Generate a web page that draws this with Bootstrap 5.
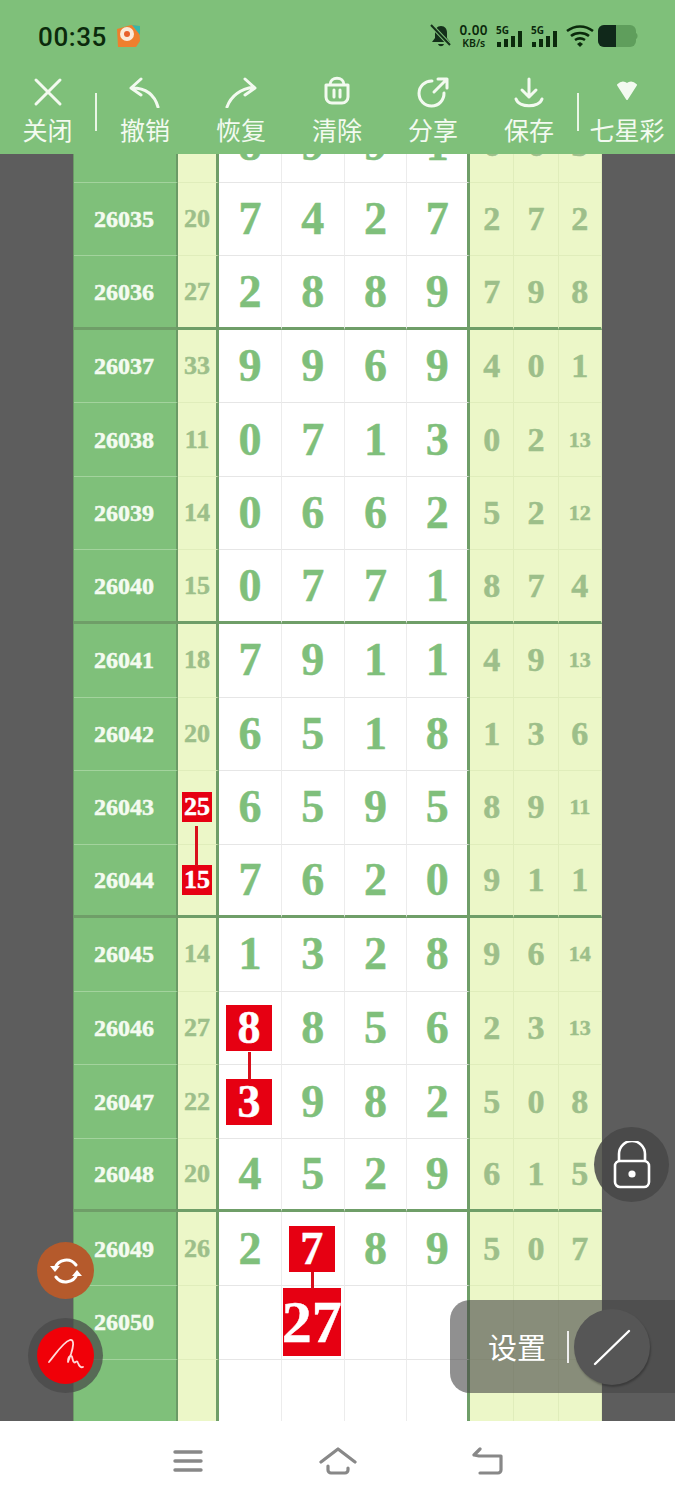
<!DOCTYPE html>
<html lang="zh">
<head>
  <meta charset="UTF-8">
  <title>七星彩</title>
  <link href="https://cdn.jsdelivr.net/npm/bootstrap@5.3.0/dist/css/bootstrap.min.css" rel="stylesheet">
  <style>
    html, body { height: 1500px; overflow: hidden; background: #fff; }
    body { font-family: "Noto Sans CJK SC", "Liberation Sans", sans-serif; }
    .phone { width: 675px; height: 1500px; position: relative; overflow: hidden; }
    .top-area { height: 154px; background: #7fc07a; flex: none; }
    .status-row { height: 72px; padding: 0 37px 0 38px; color: #0b2a0c; }
    .clock { font-family: Roboto, sans-serif; font-weight: 500; font-size: 26px; letter-spacing: .6px; line-height: 1; padding-top: 2px; }
    .speed { font-family: "Noto Sans", sans-serif; font-weight: 600; line-height: 1; text-align: center; color: #0b2a0c; }
    .speed b { display: block; font-size: 13.5px; font-weight: 600; letter-spacing: .4px; }
    .speed span { display: block; font-size: 10.5px; }
    .tool { flex: 0 0 96px; min-width: 0; color: #f3faf0; text-align: center; }
    .tool-first { flex-basis: 95px; }
    .tool svg { display: block; margin: 0 auto; height: 36px; }
    .tool-label { font-size: 25px; line-height: 32px; margin-top: 5px; white-space: nowrap; }
    .tool-sep { width: 2px; height: 38px; background: #eaf6e6; margin-top: 21px; flex: none; }
    .sheet-wrap { height: 1267px; background: #5d5d5d; overflow: hidden; flex: none; padding: 0 73px; }
    .sheet { margin-top: -44.8px; width: 529px; border-left: 1px solid #6b9a66; }
    .sheet-row { display: grid; grid-template-columns: 104px 41px repeat(4, 62.75px) 44.3px 44.3px 1fr; height: 73.56px; }
    .sheet-row > div { display: flex; align-items: center; justify-content: center; position: relative;
      font-family: "Liberation Serif", serif; font-weight: 700; border-bottom: 1px solid #e6e6e6; line-height: 1;
      -webkit-text-stroke: .5px currentColor; }
    .c-id { background: #7fc07a; color: #f4fbf0; font-size: 24px; border-right: 2px solid #6b9a66; border-bottom-color: #a3d39d !important; padding-right: 2px; }
    .c-sum { background: #ecf7c8; color: #9dbf8a; font-size: 26px; border-right: 3px solid #6f9e68; border-bottom-color: #e0edbb !important; }
    .c-num { background: #fff; color: #7fbf7b; font-size: 46px; border-right: 1px solid #ececec; }
    .c-num.last { border-right: 3px solid #6f9e68; }
    .c-side { background: #ecf7c8; color: #9dbf8a; font-size: 34px; border-right: 1px solid #e0edbb; border-bottom-color: #e0edbb !important; }
    .c-side.tiny { font-size: 22px; }
    .sheet-row.end-group > div { border-bottom: 3px solid #6f9e68 !important; }
    .hit { background: #e60012; color: #fff; display: flex; align-items: center; justify-content: center; }
    .hit-s { width: 30px; height: 30px; font-size: 26px; }
    .hit-m { width: 46px; height: 46px; font-size: 46px; margin-right: 2px; }
    .hit-l { width: 58px; height: 68px; font-size: 60px; margin-right: 2px; }
    .link-v { position: absolute; left: 50%; width: 3px; margin-left: -2px; background: #d8101c; }
    .float-btn { position: absolute; border-radius: 50%; display: flex; align-items: center; justify-content: center; }
    .fb-sync { left: 37px; top: 1242px; width: 57px; height: 57px; background: #b55a2c; }
    .fb-pen-ring { left: 28px; top: 1318px; width: 75px; height: 75px; background: rgba(72,72,72,.72); }
    .fb-pen { width: 57px; height: 57px; border-radius: 50%; background: #f00008; display: flex; align-items: center; justify-content: center; }
    .fb-lock { left: 594px; top: 1127px; width: 75px; height: 75px; background: rgba(70,70,70,.85); }
    .settings-pill { position: absolute; left: 450px; top: 1300px; width: 225px; height: 93px; border-radius: 20px 0 0 20px;
      background: rgba(70,70,70,.6); color: #fff; font-size: 29px; padding-left: 38px; }
    .pill-sep { width: 2px; height: 32px; background: #eee; margin-left: 21px; }
    .pill-knob { position: absolute; left: 124px; top: 9px; width: 76px; height: 76px; border-radius: 50%; background: #565656; box-shadow: 1px 2px 2px rgba(0,0,0,.25); }
    .nav-area { height: 79px; background: #fff; flex: none; }
    .nav-slot { width: 150px; }
  </style>
</head>
<body>
  <div class="phone d-flex flex-column">
    <div class="top-area">
      <div class="status-row d-flex align-items-center">
        <span class="clock">00:35</span>
        <svg class="ms-2" width="26" height="24" viewBox="0 0 26 24">
          <path d="M2 5l14-4 8 1 1 15-4 6H3z" fill="#ee7f2d"/>
          <path d="M17 1l8 1v9z" fill="#37b7a8"/>
          <circle cx="12" cy="10" r="7" fill="#fbe9d8"/>
          <circle cx="12" cy="10" r="3" fill="#e8602c"/>
        </svg>
        <div class="ms-auto d-flex align-items-center">
          <svg width="22" height="24" viewBox="0 0 22 24">
            <path d="M11 2c-4 0-6 3-6 7v5l-3 4h18l-3-4V9c0-4-2-7-6-7z M8 20c1 3 5 3 6 0z" fill="#14301a"/>
            <path d="M2 2l18 19" stroke="#7fc07a" stroke-width="4"/>
            <path d="M1 1l19 20" stroke="#14301a" stroke-width="2"/>
          </svg>
          <div class="speed ms-2"><b>0.00</b><span>KB/s</span></div>
          <svg class="ms-2" width="27" height="24" viewBox="0 0 27 24">
            <text x="0" y="10" font-family="Noto Sans" font-weight="700" font-size="10" fill="#0b2a0c">5G</text>
            <path d="M1 18h4v5H1z M8 15h4v8H8z M15 12h4v11h-4z M22 7h4v16h-4z" fill="#0b2a0c"/>
          </svg>
          <svg class="ms-2" width="27" height="24" viewBox="0 0 27 24">
            <text x="0" y="10" font-family="Noto Sans" font-weight="700" font-size="10" fill="#0b2a0c">5G</text>
            <path d="M1 18h4v5H1z M8 15h4v8H8z M15 12h4v11h-4z M22 7h4v16h-4z" fill="#0b2a0c"/>
          </svg>
          <svg class="ms-2" width="28" height="24" viewBox="0 0 28 24" fill="none" stroke="#0b2a0c" stroke-width="2.6">
            <path d="M1 7c8-6 18-6 26 0"/>
            <path d="M5 12c5-4 13-4 18 0"/>
            <path d="M9 16c3-2 7-2 10 0"/>
            <path d="M11 20l3-2 3 2-3 3z" fill="#0b2a0c" stroke="none"/>
          </svg>
          <svg class="ms-1" width="40" height="24" viewBox="0 0 40 24">
            <rect x="0" y="1" width="38" height="22" rx="6" fill="#5f9e5c"/>
            <path d="M6 1h12v22H6a6 6 0 0 1-6-6V7a6 6 0 0 1 6-6z" fill="#10281a"/>
            <path d="M38 9c2 1 2 5 0 6z" fill="#5f9e5c"/>
          </svg>
        </div>
      </div>
      <div class="d-flex">
        <div class="tool tool-first">
          <svg width="36" height="36" viewBox="0 0 36 36" fill="none" stroke="currentColor" stroke-width="3" stroke-linecap="round"><path d="M6 8l24 24M30 8L6 32"/></svg>
          <div class="tool-label">关闭</div>
        </div>
        <div class="tool-sep"></div>
        <div class="tool">
          <svg width="36" height="36" viewBox="0 0 36 36" fill="none" stroke="currentColor" stroke-width="3" stroke-linecap="round" stroke-linejoin="round"><path d="M14 7L4 16l10 7M5 16c12 0 22 5 26 19"/></svg>
          <div class="tool-label">撤销</div>
        </div>
        <div class="tool">
          <svg width="36" height="36" viewBox="0 0 36 36" fill="none" stroke="currentColor" stroke-width="3" stroke-linecap="round" stroke-linejoin="round"><path d="M22 7l10 9-10 7M31 15C18 17 8 24 4 35"/></svg>
          <div class="tool-label">恢复</div>
        </div>
        <div class="tool">
          <svg width="36" height="36" viewBox="0 0 36 36" fill="none" stroke="currentColor" stroke-width="3" stroke-linecap="round" stroke-linejoin="round"><path d="M11 13c0-9 14-9 14 0M7 13h22v12a6 6 0 0 1-6 6H13a6 6 0 0 1-6-6zM15 18v7M21 18v7"/></svg>
          <div class="tool-label">清除</div>
        </div>
        <div class="tool">
          <svg width="36" height="36" viewBox="0 0 36 36" fill="none" stroke="currentColor" stroke-width="3" stroke-linecap="round" stroke-linejoin="round"><path d="M17 9a12.500 12.500 0 1 0 12 12M23 7h9v9M32 7L19 20"/></svg>
          <div class="tool-label">分享</div>
        </div>
        <div class="tool">
          <svg width="36" height="36" viewBox="0 0 36 36" fill="none" stroke="currentColor" stroke-width="3" stroke-linecap="round" stroke-linejoin="round"><path d="M18 7v18M11 18l7 7 7-7M5 27c3 9 23 9 26 0"/></svg>
          <div class="tool-label">保存</div>
        </div>
        <div class="tool-sep"></div>
        <div class="tool">
          <svg width="36" height="36" viewBox="0 0 36 36"><path d="M9 13c3-3 6-3 9-1 3-2 6-2 9 1l-9 14z" fill="currentColor" stroke="currentColor" stroke-width="2" stroke-linejoin="round"/></svg>
          <div class="tool-label">七星彩</div>
        </div>
      </div>
    </div>

    <div class="sheet-wrap">
      <div class="sheet" id="sheet"></div>
    </div>

    <div class="nav-area d-flex justify-content-center align-items-center">
      <div class="nav-slot d-flex justify-content-center">
        <svg width="30" height="24" viewBox="0 0 30 24" stroke="#888" stroke-width="3.4" stroke-linecap="round"><path d="M2 3h26M2 12h26M2 21h26"/></svg>
      </div>
      <div class="nav-slot d-flex justify-content-center">
        <svg width="38" height="28" viewBox="0 0 38 28" fill="none" stroke="#888" stroke-width="3.2" stroke-linecap="round" stroke-linejoin="round"><path d="M2 15L19 2l17 13M9 19v4a3 3 0 0 0 3 3h14a3 3 0 0 0 3-3v-2"/></svg>
      </div>
      <div class="nav-slot d-flex justify-content-center">
        <svg width="34" height="28" viewBox="0 0 34 28" fill="none" stroke="#888" stroke-width="3.2" stroke-linecap="round" stroke-linejoin="round"><path d="M9 2L3 8l5 1h22v14a3 3 0 0 1-3 3H9"/></svg>
      </div>
    </div>

    <div class="float-btn fb-sync">
      <svg width="34" height="34" viewBox="0 0 34 34" fill="none" stroke="#fff" stroke-width="3" stroke-linecap="round">
        <path d="M6 14a12 12 0 0 1 21-3M28 20a12 12 0 0 1-21 3"/>
        <path d="M1 12l5 6 5-6z M23 22l5-6 5 6z" fill="#fff" stroke="none"/>
      </svg>
    </div>
    <div class="float-btn fb-pen-ring">
      <div class="fb-pen">
        <svg width="40" height="38" viewBox="0 0 40 38" fill="none" stroke="#ffd9d9" stroke-width="1.8" stroke-linecap="round" stroke-linejoin="round">
          <path d="M3 25C9 18 17 5 24 3c5-1 3 8 1 14l-3 8c0-3 1-6 3-6 2 0 1 5 3 6 1 2 3-3 4 1 1 3 3 5 5 4"/>
        </svg>
      </div>
    </div>
    <div class="float-btn fb-lock">
      <svg width="38" height="48" viewBox="0 0 38 48" fill="none" stroke="#fff" stroke-width="2.6">
        <path d="M6 20v-7a13 13 0 0 1 26 0v7"/>
        <rect x="2" y="20" width="34" height="26" rx="5"/>
        <circle cx="19" cy="33" r="3.6" fill="#fff" stroke="none"/>
      </svg>
    </div>
    <div class="settings-pill d-flex align-items-center">
      <span>设置</span>
      <div class="pill-sep"></div>
      <div class="pill-knob d-flex align-items-center justify-content-center">
        <svg width="40" height="40" viewBox="0 0 40 40" stroke="#fff" stroke-width="2.4" stroke-linecap="round"><path d="M3 37L37 4"/></svg>
      </div>
    </div>
  </div>

  <script>
    // id, sum, four digits, three side values
    const rows = [
      ["", "", "8", "9", "9", "1", "6", "6", "5"],
      ["26035", "20", "7", "4", "2", "7", "2", "7", "2"],
      ["26036", "27", "2", "8", "8", "9", "7", "9", "8"],
      ["26037", "33", "9", "9", "6", "9", "4", "0", "1"],
      ["26038", "11", "0", "7", "1", "3", "0", "2", "13"],
      ["26039", "14", "0", "6", "6", "2", "5", "2", "12"],
      ["26040", "15", "0", "7", "7", "1", "8", "7", "4"],
      ["26041", "18", "7", "9", "1", "1", "4", "9", "13"],
      ["26042", "20", "6", "5", "1", "8", "1", "3", "6"],
      ["26043", "25", "6", "5", "9", "5", "8", "9", "11"],
      ["26044", "15", "7", "6", "2", "0", "9", "1", "1"],
      ["26045", "14", "1", "3", "2", "8", "9", "6", "14"],
      ["26046", "27", "8", "8", "5", "6", "2", "3", "13"],
      ["26047", "22", "3", "9", "8", "2", "5", "0", "8"],
      ["26048", "20", "4", "5", "2", "9", "6", "1", "5"],
      ["26049", "26", "2", "7", "8", "9", "5", "0", "7"],
      ["26050", "", "", "27", "", "", "", "", ""],
      ["", "", "", "", "", "", "", "", ""]
    ];
    // red boxes: "row:col" -> size class, connector offset below centre and length
    const hits = {
      "9:1": ["hit-s", 18, 40], "10:1": ["hit-s"],
      "12:2": ["hit-m", 23, 28], "13:2": ["hit-m"],
      "15:3": ["hit-m", 23, 17], "16:3": ["hit-l"]
    };
    const sheet = document.getElementById("sheet");
    rows.forEach((r, i) => {
      const row = document.createElement("div");
      row.className = "sheet-row" + (i % 4 === 2 && i < 16 ? " end-group" : "");
      r.forEach((v, c) => {
        const cell = document.createElement("div");
        if (c === 0) cell.className = "c-id";
        else if (c === 1) cell.className = "c-sum";
        else if (c < 6) cell.className = "c-num" + (c === 5 ? " last" : "");
        else cell.className = "c-side" + (v.length > 1 ? " tiny" : "");
        const hit = hits[i + ":" + c];
        if (hit) {
          const box = document.createElement("div");
          box.className = "hit " + hit[0];
          box.textContent = v;
          cell.appendChild(box);
          if (hit[1]) {
            const line = document.createElement("div");
            line.className = "link-v";
            line.style.top = (36.8 + hit[1]) + "px";
            line.style.height = hit[2] + "px";
            cell.appendChild(line);
            cell.style.zIndex = 2;
          }
        } else {
          cell.textContent = v;
        }
        row.appendChild(cell);
      });
      sheet.appendChild(row);
    });
  </script>
  <script src="https://cdn.jsdelivr.net/npm/bootstrap@5.3.0/dist/js/bootstrap.bundle.min.js"></script>
</body>
</html>
